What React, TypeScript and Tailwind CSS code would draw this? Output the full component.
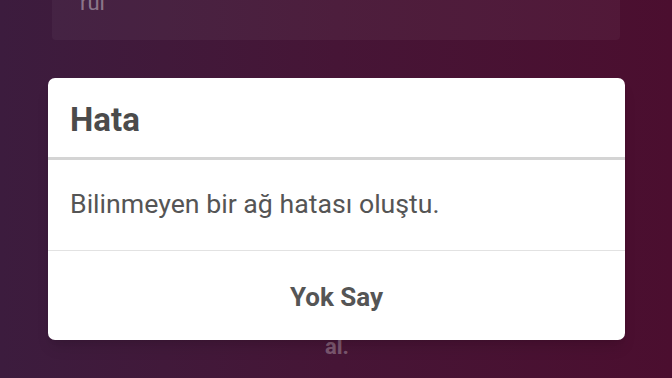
export default function App() {
  return (
    <div
      className="relative w-[672px] h-[378px] overflow-hidden bg-gradient-to-r from-[#3c1c3e] via-[#461536] to-[#4b0e2f]"
      style={{ fontFamily: 'Roboto, "Noto Sans", sans-serif' }}
    >
      {/* card behind, mostly off screen */}
      <div className="mx-[52px] h-[40px] flex flex-col bg-white/[0.04] rounded-b-sm px-7">
        <div className="text-[22px] leading-none text-white/40 -mt-[8px]">ruı</div>
      </div>

      <div className="absolute left-0 right-0 top-[330px] flex justify-center">
        <span className="text-[22px] font-bold text-white/30 ml-[2px]">al.</span>
      </div>

      {/* dialog */}
      <div className="relative mt-[38px] mx-[48px] w-[577px] bg-white rounded-[7px] shadow-lg overflow-hidden">
        <div className="h-[79px] flex items-center px-[22px] pt-[4px]">
          <h1 className="text-[33px] font-bold text-[#4b4b4b]">Hata</h1>
        </div>
        <div className="h-[3px] bg-[#d4d4d4]" />
        <div className="h-[90px] flex items-center px-[22px] pb-[2px]">
          <p className="text-[26.7px] text-[#555555]">Bilinmeyen bir ağ hatası oluştu.</p>
        </div>
        <div className="h-px bg-[#e2e2e2]" />
        <div className="h-[89px] flex items-center justify-center pt-[4px]">
          <span className="text-[26px] font-bold text-[#555555]">Yok Say</span>
        </div>
      </div>
    </div>
  );
}
